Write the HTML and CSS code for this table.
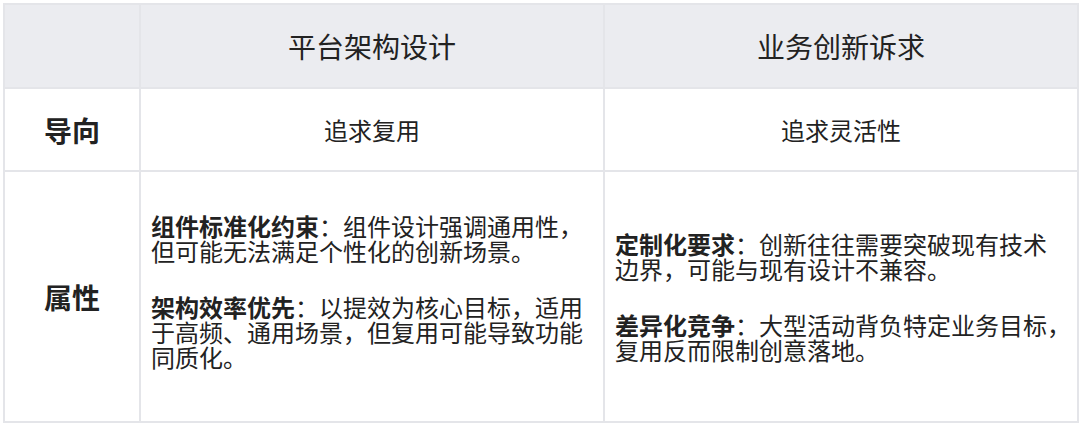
FILE: index.html
```html
<!DOCTYPE html>
<html lang="zh-CN">
<head>
<meta charset="utf-8">
<link rel="stylesheet" href="styles.css">
</head>
<body>
<div class="page">
<table class="cmp">
  <colgroup>
    <col class="c-label">
    <col class="c-a">
    <col class="c-b">
  </colgroup>
  <thead>
    <tr class="r-head">
      <th></th>
      <th>平台架构设计</th>
      <th>业务创新诉求</th>
    </tr>
  </thead>
  <tbody>
    <tr class="r-dir">
      <th class="label">导向</th>
      <td class="center">追求复用</td>
      <td class="center">追求灵活性</td>
    </tr>
    <tr class="r-attr">
      <th class="label">属性</th>
      <td class="text text-a">
        <p><b>组件标准化约束</b>：组件设计强调通用性，但可能无法满足个性化的创新场景。</p>
        <p><b>架构效率优先</b>：以提效为核心目标，适用于高频、通用场景，但复用可能导致功能同质化。</p>
      </td>
      <td class="text">
        <p><b>定制化要求</b>：创新往往需要突破现有技术边界，可能与现有设计不兼容。</p>
        <p><b>差异化竞争</b>：大型活动背负特定业务目标<span class="hang">，</span>复用反而限制创意落地。</p>
      </td>
    </tr>
  </tbody>
</table>
</div>
</body>
</html>
```
FILE: styles.css
```css
html, body {
  margin: 0;
  padding: 0;
  background: #ffffff;
}
.page {
  padding: 3px 3px 0 3px;
}
.cmp {
  width: 1074px;
  table-layout: fixed;
  border-collapse: collapse;
  font-family: "Noto Sans CJK SC", "Noto Sans", sans-serif;
  color: #222222;
}
.c-label { width: 136px; }
.c-a { width: 464px; }
.c-b { width: 474px; }
.cmp th, .cmp td {
  border: 2px solid #e4e5e9;
  padding: 0;
  vertical-align: middle;
}
.r-head { height: 84px; }
.r-head th {
  background: #ebecf0;
  font-size: 28px;
  font-weight: 400;
  text-align: center;
}
.r-dir { height: 83px; }
.r-attr { height: 251px; }
.cmp .label {
  font-size: 28px;
  font-weight: 700;
  text-align: center;
}
.cmp .center {
  font-size: 24px;
  text-align: center;
}
.cmp .text {
  font-size: 24px;
  line-height: 25px;
  padding: 0 10px 0 10px;
  text-align: left;
}
.cmp .text-a {
  padding-bottom: 12px;
}
.text p {
  margin: 0;
}
.text p + p {
  margin-top: 31px;
}
.text b {
  font-weight: 700;
}
.hang {
  font-feature-settings: "halt" 1;
}
```
